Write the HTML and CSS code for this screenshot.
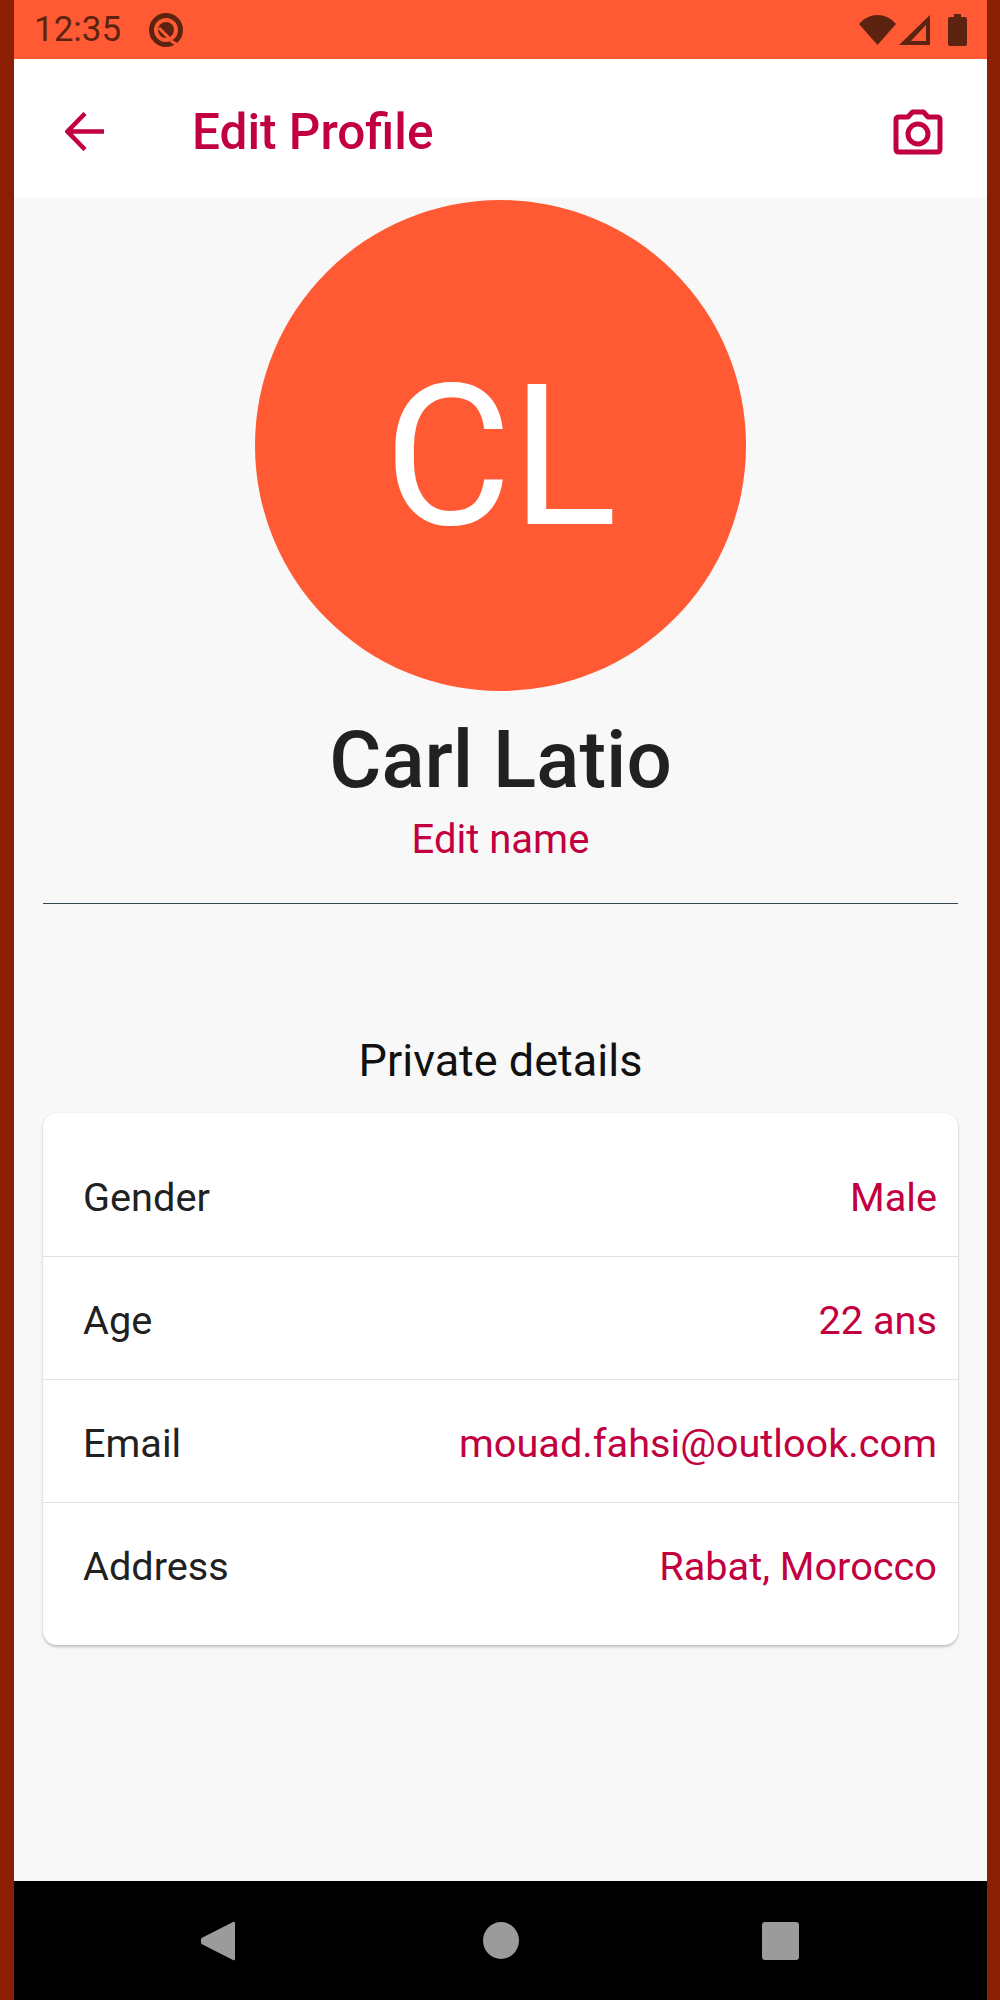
FILE: index.html
```html
<!DOCTYPE html>
<html lang="en">
<head>
    <meta charset="UTF-8">
    <meta name="viewport" content="width=device-width, initial-scale=1.0">
    <title>Edit Profile</title>
    <link rel="stylesheet" href="styles.css">
</head>
<body>
    <div class="screen">
        <div class="statusbar">
            <div class="status-left">
                <span class="time">12:35</span>
                <svg class="dnd" width="36" height="34" viewBox="0 0 36 34">
                    <circle cx="18" cy="17" r="14.500" fill="none" stroke="#5c2410" stroke-width="5"/>
                    <circle cx="18" cy="17" r="8" fill="#5c2410"/>
                    <path d="M11 15 L21 25" stroke="#ff5a33" stroke-width="3"/>
                    <path d="M23 28 L33 34" stroke="#ff5a33" stroke-width="3"/>
                </svg>
            </div>
            <div class="status-right">
                <svg width="37" height="30" viewBox="0 0 37 30"><path d="M0 9 C5 3 12 0 18.500 0 C25 0 32 3 37 9 L18.500 30 Z" fill="#5c2410"/></svg>
                <svg class="signal" width="31" height="30" viewBox="0 0 31 30"><path d="M31 0 V30 H0 Z M27 10 L12 26 H27 Z" fill="#5c2410" fill-rule="evenodd"/></svg>
                <svg class="battery" width="19" height="32" viewBox="0 0 19 32"><path d="M6 0 H13 V3 H17 Q19 3 19 5 V30 Q19 32 17 32 H2 Q0 32 0 30 V5 Q0 3 2 3 H6 Z" fill="#5c2410"/></svg>
            </div>
        </div>
        <div class="appbar">
            <svg class="back" width="39" height="39" viewBox="0 0 39 39"><path d="M39 19.500 H3 M20 1.500 L2.500 19.500 L20 37.500" fill="none" stroke="#c2003f" stroke-width="4.500"/></svg>
            <h1>Edit Profile</h1>
            <svg class="camera" width="50" height="46" viewBox="0 0 50 46">
                <path d="M3 11 Q3 8 6 8 H15 L19.500 3 H30.500 L35 8 H44 Q47 8 47 11 V40 Q47 43 44 43 H6 Q3 43 3 40 Z" fill="none" stroke="#c2003f" stroke-width="5" stroke-linejoin="round"/>
                <circle cx="25" cy="25" r="10" fill="none" stroke="#c2003f" stroke-width="5"/>
            </svg>
        </div>
        <main class="content">
            <div class="avatar">CL</div>
            <div class="name">Carl Latio</div>
            <div class="edit-name">Edit name</div>
            <div class="divider"></div>
            <div class="section-title">Private details</div>
            <div class="card">
                <div class="row"><span>Gender</span><span class="value">Male</span></div>
                <div class="row"><span>Age</span><span class="value">22 ans</span></div>
                <div class="row"><span>Email</span><span class="value">mouad.fahsi@outlook.com</span></div>
                <div class="row"><span>Address</span><span class="value">Rabat, Morocco</span></div>
            </div>
        </main>
        <div class="navbar">
            <svg width="35" height="40" viewBox="0 0 35 40"><path d="M35 2 V38 Q35 40 33 39 L1.500 23 Q0 20 1.500 17 L33 1 Q35 0 35 2 Z" fill="#9b9b9b"/></svg>
            <div class="nav-circle"></div>
            <div class="nav-square"></div>
        </div>
    </div>
</body>
</html>
```

FILE: styles.css
```css
* {
    box-sizing: border-box;
}
body {
    margin: 0;
    background: #8a1f05;
    font-family: Roboto, "Noto Sans", sans-serif;
}
.screen {
    width: 973px;
    height: 2000px;
    margin-left: 14px;
    display: flex;
    flex-direction: column;
    background: #f8f8f8;
}
.statusbar {
    height: 59px;
    flex-shrink: 0;
    background: #ff5a33;
    display: flex;
    justify-content: space-between;
    align-items: center;
    padding: 0 20px 0 20px;
    color: #5c2410;
}
.status-left {
    display: flex;
    align-items: center;
    gap: 27px;
}
.time {
    font-size: 35px;
}
.status-right {
    display: flex;
    align-items: center;
    gap: 3px;
}
.battery {
    margin-left: 15px;
}
.appbar {
    height: 139px;
    flex-shrink: 0;
    background: #fff;
    display: flex;
    align-items: center;
    padding: 6px 44px 0 51px;
}
.appbar h1 {
    flex: 1;
    margin: 0 0 0 88px;
    font-size: 49.500px;
    font-weight: 500;
    color: #c2003f;
}
.content {
    flex: 1;
    display: flex;
    flex-direction: column;
    align-items: center;
    padding: 2px 29px 0;
}
.avatar {
    width: 491px;
    height: 491px;
    flex-shrink: 0;
    padding-top: 22px;
    border-radius: 50%;
    background: #ff5a33;
    color: #fff;
    font-size: 196px;
    display: flex;
    align-items: center;
    justify-content: center;
}
.name {
    margin-top: 24px;
    font-size: 80px;
    line-height: 90px;
    font-weight: 500;
    color: #212121;
}
.edit-name {
    margin-top: 10px;
    font-size: 40px;
    line-height: 50px;
    color: #c2003f;
}
.divider {
    width: 100%;
    height: 1px;
    margin-top: 38px;
    background: #37474f;
}
.section-title {
    margin-top: 132px;
    font-size: 45px;
    line-height: 50px;
    color: #111;
}
.card {
    width: 100%;
    height: 532px;
    margin-top: 27px;
    padding: 21px 0 20px;
    background: #fff;
    border-radius: 14px;
    box-shadow: 0 2px 3px rgba(0, 0, 0, 0.22), 0 0 2px rgba(0, 0, 0, 0.06);
}
.row {
    height: 123px;
    display: flex;
    justify-content: space-between;
    align-items: center;
    padding: 4px 21px 0 40px;
    font-size: 39.700px;
    color: #212121;
    border-bottom: 1px solid #e2e2e2;
}
.row:last-child {
    border-bottom: none;
}
.value {
    color: #c2003f;
}
.navbar {
    height: 119px;
    flex-shrink: 0;
    background: #000;
    display: flex;
    align-items: center;
    padding: 0 0 0 186px;
}
.nav-circle {
    width: 36px;
    height: 37px;
    margin-left: 248px;
    border-radius: 50%;
    background: #9b9b9b;
}
.nav-square {
    width: 37px;
    height: 38px;
    margin-left: 243px;
    border-radius: 3px;
    background: #9b9b9b;
}
```
